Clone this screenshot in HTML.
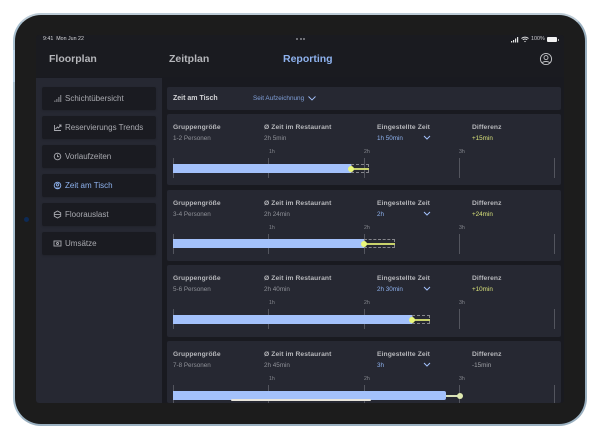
<!DOCTYPE html>
<html><head><meta charset="utf-8">
<style>
html,body{margin:0;padding:0;width:600px;height:438px;overflow:hidden;background:#fff;font-family:"Liberation Sans",sans-serif}
div,span,svg{position:absolute;box-sizing:border-box}
.t{white-space:nowrap;line-height:10px;height:10px}
.btn{left:42px;width:114px;background:#1a1b21;border-radius:2px;box-shadow:0 1px 2px rgba(0,0,0,.15)}
.bt{left:65px;font-size:8px;color:#a9aab0;white-space:nowrap;line-height:12px}
.card{left:167px;width:394px;background:#262832;border-radius:2px}
.h{font-size:6.7px;font-weight:bold;color:#b6b7bb;letter-spacing:.1px}
.s{font-size:6.3px;color:#8f9198}
.tick{width:1px;background:#53555e;height:20px}
.tl{font-size:5.2px;color:#85878e}
.bar{background:#a3c1fb;height:9px;left:6px}
.dash{border:1px dashed #86878c;height:9px}
.line{height:1.5px;background:#c9d26c}
.dot{width:6px;height:6px;border-radius:50%;background:#e9f77c}
.nav{font-size:10.5px;font-weight:bold;color:#b5b6ba;white-space:nowrap;line-height:14px}
</style></head><body>
<div style="left:13px;top:13px;width:574px;height:413px;background:#1c1c1c;border-radius:28px;border:2px solid #a9c0d0;border-top-color:#bccbd6;border-bottom-color:#9ab0c0;border-right-color:#9ab0c0"></div>
<div style="left:13px;top:50px;width:2px;height:32px;background:#bcd3e6"></div>
<div style="left:24px;top:217px;width:5px;height:5px;border-radius:50%;background:#0d2a55"></div>

<div style="left:36px;top:35px;width:528px;height:368px;background:#191a20;overflow:hidden;border-radius:3px">
 <div style="left:0;top:43px;width:126px;height:325px;background:#262832"></div>
</div>
<div style="left:36px;top:35px;width:528px;height:42px;background:#1a1b20;border-radius:3px 3px 0 0"></div>

<div class="t" style="left:43px;top:34px;font-size:5.3px;color:#d5d5d8">9:41&nbsp;&nbsp;Mon Jun 22</div>
<div style="left:296px;top:38px;width:2px;height:2px;border-radius:50%;background:#8a8b90"></div>
<div style="left:299.5px;top:38px;width:2px;height:2px;border-radius:50%;background:#8a8b90"></div>
<div style="left:303px;top:38px;width:2px;height:2px;border-radius:50%;background:#8a8b90"></div>
<svg style="left:510px;top:36px" width="10" height="7" viewBox="0 0 10 7"><path d="M1 5h1.2v1.5H1zM3 4h1.2v2.5H3zM5 2.5h1.2v4H5zM7 1h1.2v5.5H7z" fill="#e5e5e5"/></svg>
<svg style="left:521px;top:36px" width="8" height="7" viewBox="0 0 8 7"><path d="M.5 2.5C2.5.7 5.5.7 7.5 2.5M1.8 3.8C3 2.8 5 2.8 6.2 3.8" stroke="#e5e5e5" fill="none" stroke-width="1"/><path d="M3 5 4 6.3 5 5z" fill="#e5e5e5"/></svg>
<div class="t" style="left:531px;top:34px;font-size:5.4px;color:#c9c9cc">100%</div>
<div style="left:547px;top:37px;width:10px;height:5px;background:#f2f2f2;border-radius:1px"></div>
<div style="left:558px;top:38.5px;width:1px;height:2px;background:#aaa"></div>

<div class="nav" style="left:49px;top:52px">Floorplan</div>
<div class="nav" style="left:169px;top:52px">Zeitplan</div>
<div class="nav" style="left:283px;top:52px;color:#8eb2ee">Reporting</div>
<svg style="left:539px;top:52px" width="14" height="14" viewBox="0 0 14 14" fill="none" stroke="#c4c5c8" stroke-width=".9"><circle cx="7" cy="7" r="5.6"/><circle cx="7" cy="5.6" r="2"/><path d="M3.4 11C4.2 9 9.8 9 10.6 11"/></svg>

<div class="btn" style="top:87px;height:23px"></div>
<div class="btn" style="top:116px;height:23px"></div>
<div class="btn" style="top:145px;height:23px"></div>
<div class="btn" style="top:174px;height:23px"></div>
<div class="btn" style="top:203px;height:23px"></div>
<div class="btn" style="top:232px;height:23px"></div>

<svg style="left:53px;top:94px" width="9" height="9" viewBox="0 0 9 9" fill="#a9aab0"><path d="M1.5 6.5h.8v1.5h-.8zM3.5 5h.8v3h-.8zM5.5 3h.8v5h-.8zM7.4 1h.8v7h-.8z"/></svg>
<svg style="left:53px;top:123px" width="9" height="9" viewBox="0 0 9 9" fill="none" stroke="#a9aab0" stroke-width=".9"><path d="M1.5 2v5.5h6.5M2.5 6 4.5 4l1 1 2-2.5M6 2h2v2"/></svg>
<svg style="left:53px;top:152px" width="9" height="9" viewBox="0 0 9 9" fill="none" stroke="#a9aab0" stroke-width=".9"><circle cx="4.5" cy="4.5" r="3.3"/><path d="M4.5 2.5v2.2h1.7"/></svg>
<svg style="left:53px;top:181px" width="9" height="9" viewBox="0 0 9 9" fill="none" stroke="#8eb2ee" stroke-width=".9"><circle cx="4.5" cy="4.5" r="3.3"/><circle cx="4.5" cy="3.8" r="1.2"/><path d="M2 7h5"/></svg>
<svg style="left:53px;top:210px" width="9" height="9" viewBox="0 0 9 9" fill="none" stroke="#a9aab0" stroke-width=".9"><path d="M4.5 1 7.7 2.8v3.4L4.5 8 1.3 6.2V2.8z"/><path d="M1.5 4.5h6"/></svg>
<svg style="left:53px;top:239px" width="9" height="9" viewBox="0 0 9 9" fill="none" stroke="#a9aab0" stroke-width=".9"><rect x="1" y="2" width="7" height="5"/><circle cx="4.5" cy="4.5" r="1"/></svg>

<div class="bt" style="top:93px">Schichtübersicht</div>
<div class="bt" style="top:122px">Reservierungs Trends</div>
<div class="bt" style="top:151px">Vorlaufzeiten</div>
<div class="bt" style="top:180px;color:#8eb2ee">Zeit am Tisch</div>
<div class="bt" style="top:209px">Floorauslast</div>
<div class="bt" style="top:238px">Umsätze</div>

<div class="card" style="top:87px;height:23px"></div>
<div class="t" style="left:173px;top:94px;font-size:7px;font-weight:bold;color:#d2d3d6">Zeit am Tisch</div>
<div class="t" style="left:253px;top:94px;font-size:6.4px;color:#7f9fd8">Seit Aufzeichnung</div>
<svg style="left:307px;top:95px" width="10" height="7" viewBox="0 0 10 7" fill="none" stroke="#a3c1fb" stroke-width=".9"><path d="M1.5 1.5 5 5 8.5 1.5"/></svg>

<!-- Card 1 -->
<div class="card" style="top:114px;height:71px">
 <div class="t h" style="left:6px;top:9px">Gruppengröße</div><div class="t s" style="left:6px;top:20px">1-2 Personen</div>
 <div class="t h" style="left:97px;top:9px">Ø Zeit im Restaurant</div><div class="t s" style="left:97px;top:20px">2h 5min</div>
 <div class="t h" style="left:210px;top:9px">Eingestellte Zeit</div><div class="t s" style="left:210px;top:20px;color:#8eb2ee">1h 50min</div>
 <svg style="left:256px;top:21px" width="8" height="5" viewBox="0 0 8 5" fill="none" stroke="#a3c1fb"><path d="M1 1 4 4 7 1"/></svg>
 <div class="t h" style="left:305px;top:9px">Differenz</div><div class="t s" style="left:305px;top:20px;color:#d9e27a">+15min</div>
 <div class="t tl" style="left:102px;top:33px">1h</div><div class="t tl" style="left:197px;top:33px">2h</div><div class="t tl" style="left:292px;top:33px">3h</div>
 <div class="tick" style="left:6px;top:44px"></div><div class="tick" style="left:101px;top:44px"></div><div class="tick" style="left:197px;top:44px"></div><div class="tick" style="left:292px;top:44px"></div><div class="tick" style="left:387px;top:44px"></div>
 <div class="bar" style="top:50px;width:178px"></div>
 <div class="dash" style="left:184px;top:50px;width:18px"></div>
 <div class="line" style="left:184px;top:54px;width:18px"></div>
 <div class="dot" style="left:181px;top:52px"></div>
</div>
<!-- Card 2 -->
<div class="card" style="top:190px;height:71px">
 <div class="t h" style="left:6px;top:9px">Gruppengröße</div><div class="t s" style="left:6px;top:20px">3-4 Personen</div>
 <div class="t h" style="left:97px;top:9px">Ø Zeit im Restaurant</div><div class="t s" style="left:97px;top:20px">2h 24min</div>
 <div class="t h" style="left:210px;top:9px">Eingestellte Zeit</div><div class="t s" style="left:210px;top:20px;color:#8eb2ee">2h</div>
 <svg style="left:256px;top:21px" width="8" height="5" viewBox="0 0 8 5" fill="none" stroke="#a3c1fb"><path d="M1 1 4 4 7 1"/></svg>
 <div class="t h" style="left:305px;top:9px">Differenz</div><div class="t s" style="left:305px;top:20px;color:#d9e27a">+24min</div>
 <div class="t tl" style="left:102px;top:33px">1h</div><div class="t tl" style="left:197px;top:33px">2h</div><div class="t tl" style="left:292px;top:33px">3h</div>
 <div class="tick" style="left:6px;top:44px"></div><div class="tick" style="left:101px;top:44px"></div><div class="tick" style="left:197px;top:44px"></div><div class="tick" style="left:292px;top:44px"></div><div class="tick" style="left:387px;top:44px"></div>
 <div class="bar" style="top:49px;width:191px"></div>
 <div class="dash" style="left:197px;top:49px;width:31px"></div>
 <div class="line" style="left:197px;top:53px;width:31px"></div>
 <div class="dot" style="left:194px;top:51px"></div>
</div>
<!-- Card 3 -->
<div class="card" style="top:265px;height:72px">
 <div class="t h" style="left:6px;top:9px">Gruppengröße</div><div class="t s" style="left:6px;top:20px">5-6 Personen</div>
 <div class="t h" style="left:97px;top:9px">Ø Zeit im Restaurant</div><div class="t s" style="left:97px;top:20px">2h 40min</div>
 <div class="t h" style="left:210px;top:9px">Eingestellte Zeit</div><div class="t s" style="left:210px;top:20px;color:#8eb2ee">2h 30min</div>
 <svg style="left:256px;top:21px" width="8" height="5" viewBox="0 0 8 5" fill="none" stroke="#a3c1fb"><path d="M1 1 4 4 7 1"/></svg>
 <div class="t h" style="left:305px;top:9px">Differenz</div><div class="t s" style="left:305px;top:20px;color:#d9e27a">+10min</div>
 <div class="t tl" style="left:102px;top:33px">1h</div><div class="t tl" style="left:197px;top:33px">2h</div><div class="t tl" style="left:292px;top:33px">3h</div>
 <div class="tick" style="left:6px;top:44px"></div><div class="tick" style="left:101px;top:44px"></div><div class="tick" style="left:197px;top:44px"></div><div class="tick" style="left:292px;top:44px"></div><div class="tick" style="left:387px;top:44px"></div>
 <div class="bar" style="top:50px;width:239px"></div>
 <div class="dash" style="left:245px;top:50px;width:18px"></div>
 <div class="line" style="left:245px;top:54px;width:18px"></div>
 <div class="dot" style="left:242px;top:52px"></div>
</div>
<!-- Card 4 -->
<div class="card" style="top:341px;height:62px;overflow:hidden">
 <div class="t h" style="left:6px;top:9px">Gruppengröße</div><div class="t s" style="left:6px;top:20px">7-8 Personen</div>
 <div class="t h" style="left:97px;top:9px">Ø Zeit im Restaurant</div><div class="t s" style="left:97px;top:20px">2h 45min</div>
 <div class="t h" style="left:210px;top:9px">Eingestellte Zeit</div><div class="t s" style="left:210px;top:20px;color:#8eb2ee">3h</div>
 <svg style="left:256px;top:21px" width="8" height="5" viewBox="0 0 8 5" fill="none" stroke="#a3c1fb"><path d="M1 1 4 4 7 1"/></svg>
 <div class="t h" style="left:305px;top:9px">Differenz</div><div class="t s" style="left:305px;top:20px;color:#9fa1a6">-15min</div>
 <div class="t tl" style="left:102px;top:33px">1h</div><div class="t tl" style="left:197px;top:33px">2h</div><div class="t tl" style="left:292px;top:33px">3h</div>
 <div class="tick" style="left:6px;top:44px"></div><div class="tick" style="left:101px;top:44px"></div><div class="tick" style="left:197px;top:44px"></div><div class="tick" style="left:292px;top:44px"></div><div class="tick" style="left:387px;top:44px"></div>
 <div class="bar" style="top:50px;width:273px;border-radius:0 2px 2px 0"></div>
 <div class="line" style="left:279px;top:54px;width:14px;background:#d8e0b8"></div>
 <div class="dot" style="left:290px;top:52px;background:#dfeab0"></div>
</div>
<div style="left:231px;top:399px;width:140px;height:2px;background:#e8e4da;border-radius:1px"></div>
</body></html>
